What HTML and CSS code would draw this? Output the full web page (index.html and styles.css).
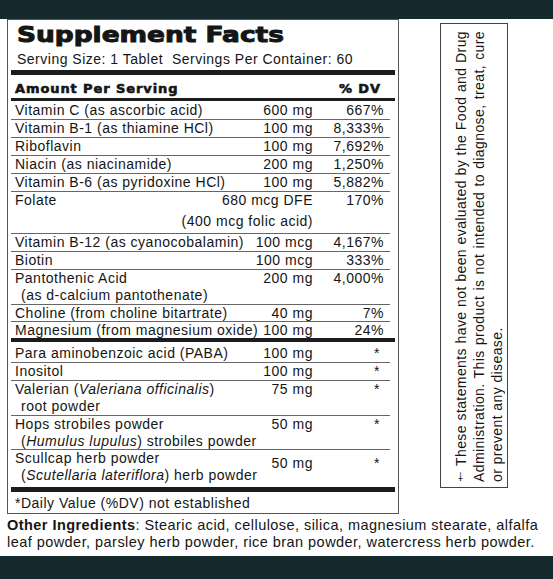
FILE: index.html
```html
<!DOCTYPE html>
<html lang="en">

<head>
    <meta charset="UTF-8">
    <title>Supplement Facts</title>
    <link rel="stylesheet" href="styles.css">
</head>

<body>
    <div class="band"></div>

    <div class="content">
        <section class="facts">
            <h1 class="titel">Supplement Facts</h1>
            <p class="serving">Serving Size: 1 Tablet&nbsp; Servings Per Container: 60</p>
            <div class="bar tyk"></div>
            <div class="row head">
                <span class="navn">Amount Per Serving</span>
                <span></span>
                <span class="dv">% DV</span>
            </div>
            <div class="bar"></div>

            <div class="row forste"><span class="navn">Vitamin C (as ascorbic acid)</span><span class="maengde">600 mg</span><span class="dv">667%</span></div>
            <div class="row"><span class="navn">Vitamin B-1 (as thiamine HCl)</span><span class="maengde">100 mg</span><span class="dv">8,333%</span></div>
            <div class="row"><span class="navn">Riboflavin</span><span class="maengde">100 mg</span><span class="dv">7,692%</span></div>
            <div class="row"><span class="navn">Niacin (as niacinamide)</span><span class="maengde">200 mg</span><span class="dv">1,250%</span></div>
            <div class="row"><span class="navn">Vitamin B-6 (as pyridoxine HCl)</span><span class="maengde">100 mg</span><span class="dv">5,882%</span></div>
            <div class="row folate"><span class="navn">Folate</span><span class="maengde">680 mcg DFE<span class="linje2">(400 mcg folic acid)</span></span><span class="dv">170%</span></div>
            <div class="row"><span class="navn">Vitamin B-12 (as cyanocobalamin)</span><span class="maengde">100 mcg</span><span class="dv">4,167%</span></div>
            <div class="row"><span class="navn">Biotin</span><span class="maengde">100 mcg</span><span class="dv">333%</span></div>
            <div class="row"><span class="navn">Pantothenic Acid<span class="sub">(as d-calcium pantothenate)</span></span><span class="maengde">200 mg</span><span class="dv">4,000%</span></div>
            <div class="row lav"><span class="navn">Choline (from choline bitartrate)</span><span class="maengde">40 mg</span><span class="dv">7%</span></div>
            <div class="row lav sidste"><span class="navn">Magnesium (from magnesium oxide)</span><span class="maengde">100 mg</span><span class="dv">24%</span></div>

            <div class="bar midterbar"></div>

            <div class="row para"><span class="navn">Para aminobenzoic acid (PABA)</span><span class="maengde">100 mg</span><span class="dv stjerne">*</span></div>
            <div class="row"><span class="navn">Inositol</span><span class="maengde">100 mg</span><span class="dv stjerne">*</span></div>
            <div class="row urt valerian"><span class="navn">Valerian (<i>Valeriana officinalis</i>)<span class="sub">root powder</span></span><span class="maengde">75 mg</span><span class="dv stjerne">*</span></div>
            <div class="row urt"><span class="navn">Hops strobiles powder<span class="sub">(<i>Humulus lupulus</i>) strobiles powder</span></span><span class="maengde">50 mg</span><span class="dv stjerne">*</span></div>
            <div class="row urt sidste scullcap"><span class="navn">Scullcap herb powder<span class="sub">(<i>Scutellaria lateriflora</i>) herb powder</span></span><span class="maengde">50 mg</span><span class="dv stjerne">*</span></div>

            <div class="bar bundbar"></div>
            <p class="note">*Daily Value (%DV) not established</p>
        </section>

        <aside class="disclaimer">
            <p><span class="lige"><span class="dolk">†</span> These statements have not been evaluated by the Food and Drug</span><span class="lige">Administration. This product is not intended to diagnose, treat, cure</span><span>or prevent any disease.</span></p>
        </aside>
    </div>

    <p class="other"><b>Other Ingredients</b>: Stearic acid, cellulose, silica, magnesium stearate, alfalfa<br>leaf powder, parsley herb powder, rice bran powder, watercress herb powder.</p>

    <div class="band bund"></div>
</body>

</html>
```

FILE: styles.css
```css
* {
    box-sizing: border-box;
    margin: 0;
    padding: 0;
}

body {
    width: 553px;
    height: 579px;
    display: flex;
    flex-direction: column;
    background-color: #fff;
    color: #151515;
    font-family: "Liberation Sans", Arial, sans-serif;
    font-size: 14px;
    letter-spacing: 0.5px;
}

.band {
    height: 19px;
    background-color: #142a2d;
}

.bund {
    height: 23px;
    margin-top: auto;
}

.content {
    display: flex;
    align-items: flex-start;
    padding-left: 7px;
}

/* venstre boks med tabellen */
.facts {
    width: 392px;
    height: 495px;
    padding: 0 3px;
    border: 1px solid #555;
}

.titel {
    margin: 3px 0 0 6px;
    font-family: "DejaVu Sans", sans-serif;
    font-size: 22px;
    line-height: 24px;
    font-weight: bold;
    letter-spacing: 0;
    -webkit-text-stroke: 1px #151515;
    transform: scaleX(1.2);
    transform-origin: left;
}

.serving {
    margin: 4px 0 0 6px;
    line-height: 17px;
}

.bar {
    height: 3px;
    margin-top: 1px;
    background-color: #1c1c1c;
}

.tyk {
    height: 5px;
    margin-top: 2px;
}

.midterbar {
    height: 4px;
    margin-top: 0;
}

.bundbar {
    height: 5px;
    margin-top: 0;
}

.row {
    display: grid;
    grid-template-columns: 1fr auto 71px;
    margin-right: 5px;
    padding: 0 6px 0 4px;
    line-height: 17px;
    white-space: nowrap;
    border-bottom: 1px solid #666;
}

.row.head {
    margin-top: 6px;
    line-height: 16px;
    border-bottom: none;
    font-family: "DejaVu Sans", sans-serif;
    font-weight: bold;
    font-size: 13px;
    letter-spacing: 0.9px;
    -webkit-text-stroke: 0.6px #151515;
}

.row.head .dv {
    padding-right: 3px;
}

.forste {
    padding-top: 1px;
}

.folate {
    padding-bottom: 3px;
}

.linje2 {
    display: block;
    margin-top: 4px;
}

.lav {
    line-height: 16px;
}

.sidste {
    border-bottom: none;
}

.para {
    padding-top: 3px;
}

.sub {
    display: block;
    padding-left: 6px;
}

.urt .sub {
    line-height: 16px;
}

.valerian {
    padding-bottom: 1px;
}

.scullcap {
    padding-bottom: 4px;
}

.scullcap .maengde,
.scullcap .dv {
    padding-top: 5px;
}

.maengde,
.dv {
    text-align: right;
}

.stjerne {
    padding-right: 4px;
}

.note {
    padding: 3px 0 0 4px;
    line-height: 16px;
}

/* lodret tekst i boksen til hoejre */
.disclaimer {
    width: 68px;
    height: 465px;
    margin: 4px 0 0 41px;
    padding: 7px 0 5px 11px;
    border: 1px solid #444;
}

.disclaimer p {
    height: 100%;
    writing-mode: vertical-rl;
    transform: rotate(180deg);
    line-height: 18px;
    letter-spacing: 0.4px;
    white-space: nowrap;
}

.disclaimer span {
    display: block;
}

.disclaimer .lige {
    text-align-last: justify;
}

.disclaimer .dolk {
    display: inline;
    font-size: 10px;
}

.other {
    padding: 3px 0 0 7px;
    font-size: 14.5px;
    line-height: 17px;
    letter-spacing: 0.45px;
    white-space: nowrap;
}
```
